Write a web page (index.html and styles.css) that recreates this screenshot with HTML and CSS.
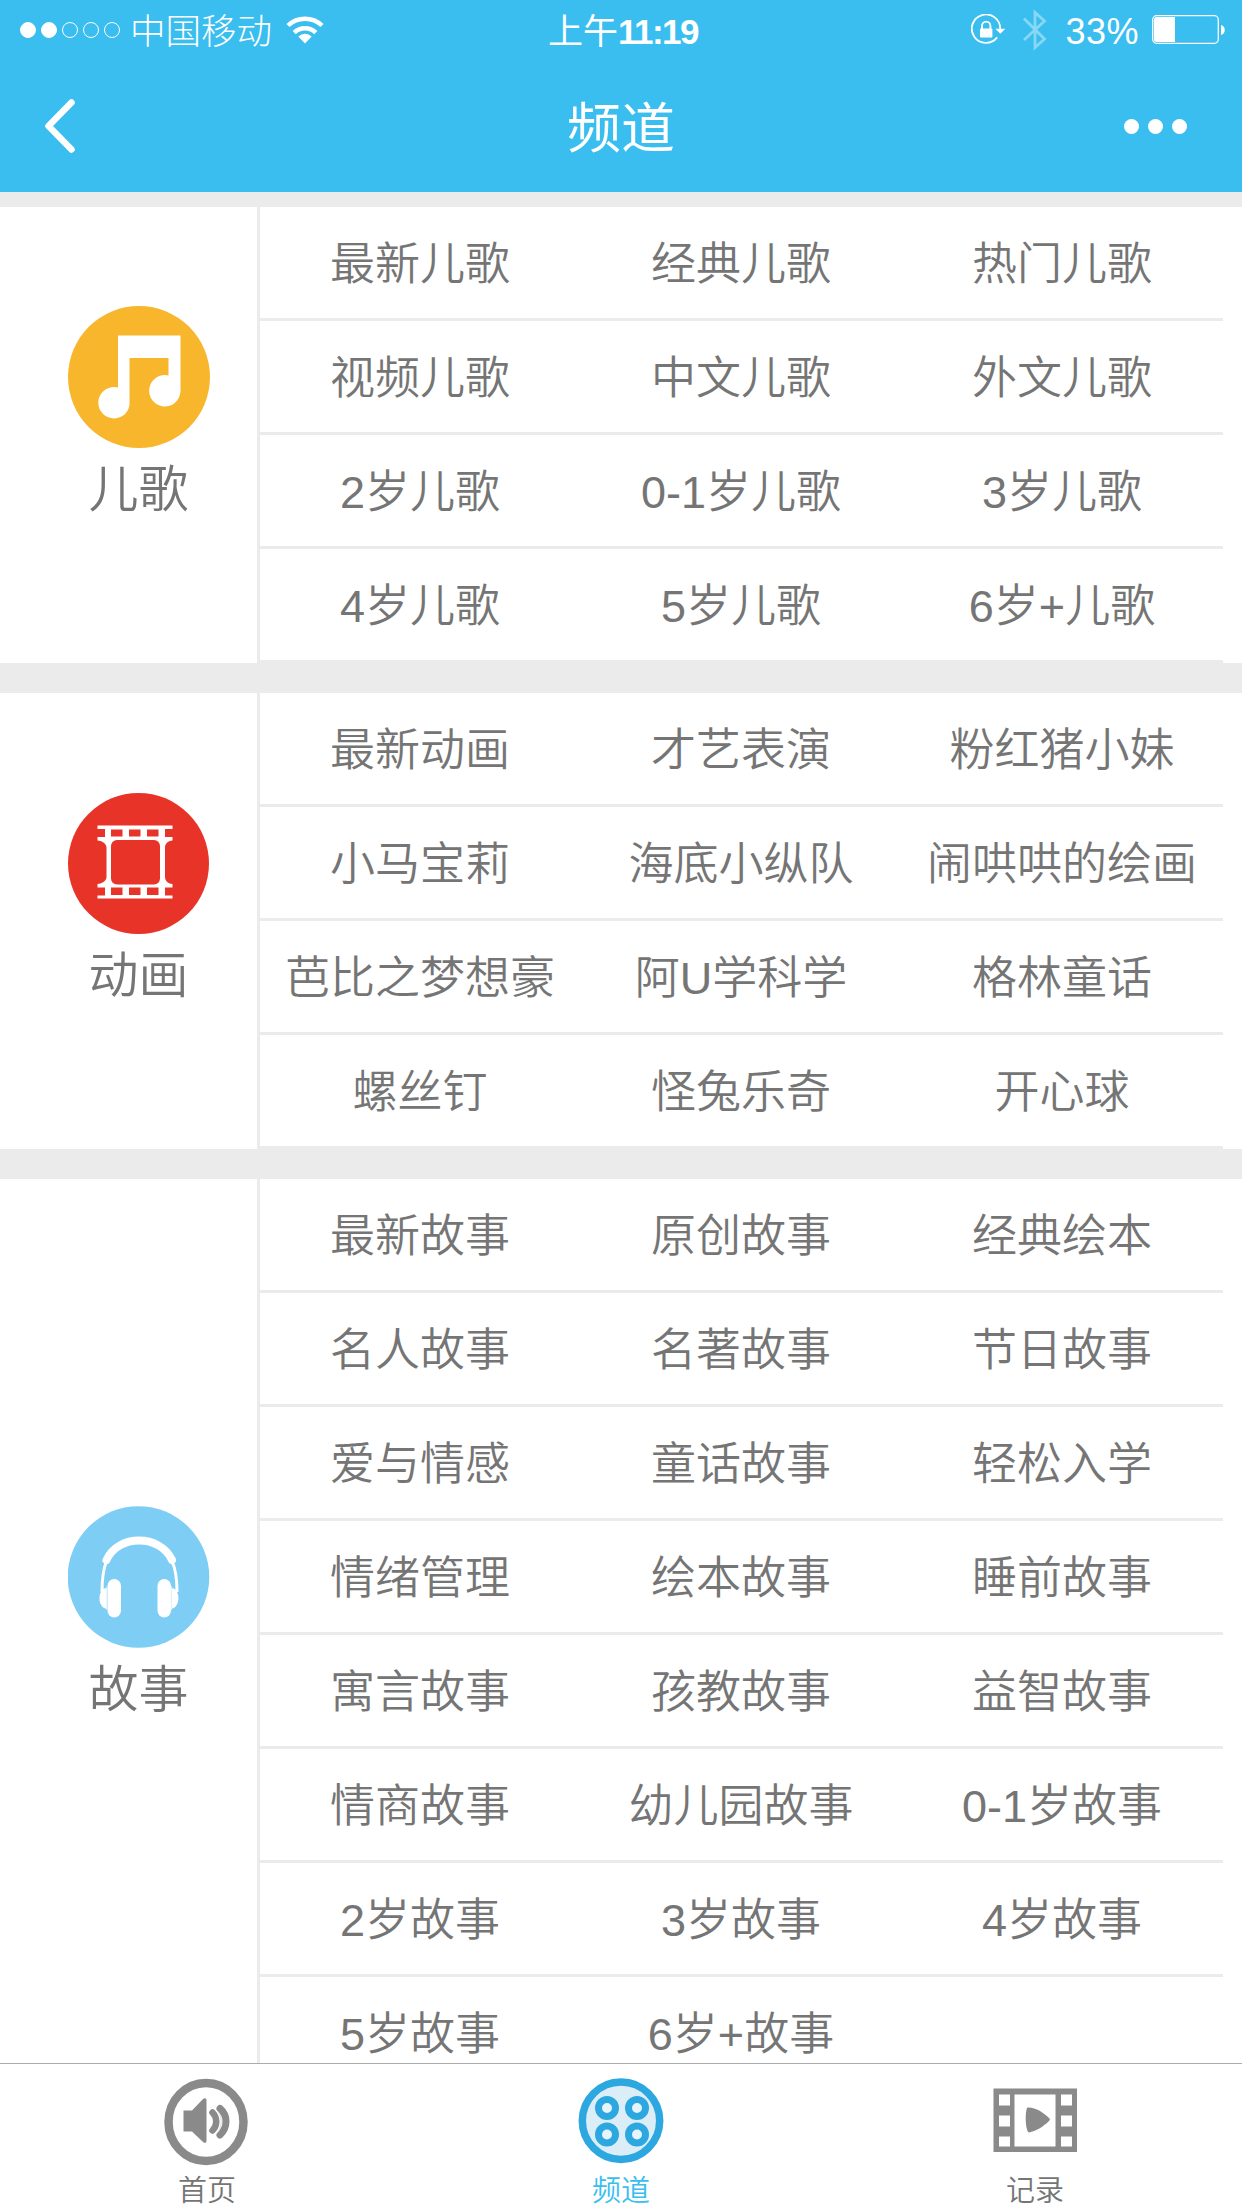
FILE: index.html
```html
<!DOCTYPE html>
<html lang="zh-CN">
<head>
    <meta charset="UTF-8">
    <meta name="viewport" content="width=device-width, initial-scale=1.0">
    <title>频道</title>
    <link rel="stylesheet" href="styles.css">
</head>
<body>
    <header class="header">
        <div class="status-bar">
            <div class="status-left">
                <div class="signal">
                    <i class="on"></i><i class="on"></i><i></i><i></i><i></i>
                </div>
                <span class="carrier">中国移动</span>
                <svg class="wifi" width="38" height="28" viewBox="0 0 38 28">
                    <g fill="none" stroke="#fff" stroke-width="4.500">
                        <path d="M2 9.500a24.500 24.500 0 0 1 34 0"/>
                        <path d="M8.200 16.700a15.500 15.500 0 0 1 21.600 0"/>
                    </g>
                    <path d="M19 27.500l-6.700-7a9.800 9.800 0 0 1 13.400 0z" fill="#fff"/>
                </svg>
            </div>
            <div class="time">上午<span>11:19</span></div>
            <div class="status-right">
                <svg class="lock" width="36" height="32" viewBox="0 0 36 32">
                    <path d="M26.200 23.400A14.200 14.200 0 1 1 29.200 15" fill="none" stroke="#fff" stroke-width="1.800"/>
                    <path d="M24.300 14.800h10l-5 5z" fill="#fff"/>
                    <rect x="9" y="14.500" width="12.400" height="9" rx="1" fill="#fff"/>
                    <path d="M11 15v-3.200a4.200 4.200 0 0 1 8.400 0V15" fill="none" stroke="#fff" stroke-width="1.900"/>
                </svg>
                <svg class="bluetooth" width="24" height="42" viewBox="0 0 24 42">
                    <path d="M1 9.500L21.500 30 12 38.500v-35l9.500 8.500L1 31" fill="none" stroke="#88d8f5" stroke-width="2.800"/>
                </svg>
                <span class="percent">33%</span>
                <svg class="battery" width="74" height="30" viewBox="0 0 74 30">
                    <rect x=".7" y=".7" width="65.600" height="27.600" rx="4" fill="none" stroke="#fff" stroke-width="1.300"/>
                    <path d="M4.500 2H23v25H4.500A2.500 2.500 0 0 1 2 24.500v-20A2.500 2.500 0 0 1 4.500 2z" fill="#fff"/>
                    <path d="M69 10c5 1 5 9 0 10z" fill="#fff"/>
                </svg>
            </div>
        </div>
        <div class="nav-bar">
            <svg class="back" width="32" height="54" viewBox="0 0 32 54">
                <path d="M28.500 3.500L5.500 27l23 23.500" fill="none" stroke="#fff" stroke-width="6.500" stroke-linecap="round" stroke-linejoin="round"/>
            </svg>
            <h1>频道</h1>
            <div class="more"><i></i><i></i><i></i></div>
        </div>
    </header>

    <main class="channels">
        <section class="channel">
            <div class="category">
                <svg width="142" height="142" viewBox="0 0 142 142">
                    <circle cx="71" cy="71" r="71" fill="#f8b62c"/>
                    <path d="M50 29.500h62.500V85a15.700 15.700 0 1 1-12-15.500V52H61.500v47a15.700 15.700 0 1 1-11.500-17.500z" fill="#fff"/>
                </svg>
                <h2>儿歌</h2>
            </div>
            <ul class="items">
                <li>最新儿歌</li>
                <li>经典儿歌</li>
                <li>热门儿歌</li>
                <li>视频儿歌</li>
                <li>中文儿歌</li>
                <li>外文儿歌</li>
                <li>2岁儿歌</li>
                <li>0-1岁儿歌</li>
                <li>3岁儿歌</li>
                <li>4岁儿歌</li>
                <li>5岁儿歌</li>
                <li>6岁+儿歌</li>
            </ul>
        </section>

        <section class="channel">
            <div class="category">
                <svg width="142" height="142" viewBox="0 0 142 142">
                    <circle cx="70.500" cy="71.500" r="70.500" fill="#e83428"/>
                    <path d="M29.500 33.500h75V37H97v8h7.500v3.500c-4 0-7.500 3-7.500 7V85c0 4 3.500 7 7.500 7v3.500H97v8h7.500v3h-75v-3H37v-8h-7.500V92c4 0 9-3 9-7V55.500c0-4-5-7-9-7V45H37v-8h-7.500z" fill="#fff"/>
                    <g fill="#e83428">
                        <rect x="43" y="48" width="49" height="44.500" rx="6"/>
                        <rect x="43" y="37.500" width="11.500" height="7"/>
                        <rect x="61" y="37.500" width="11.500" height="7"/>
                        <rect x="79" y="37.500" width="11.500" height="7"/>
                        <rect x="43" y="95.500" width="11.500" height="7.500"/>
                        <rect x="61" y="95.500" width="11.500" height="7.500"/>
                        <rect x="79" y="95.500" width="11.500" height="7.500"/>
                    </g>
                </svg>
                <h2>动画</h2>
            </div>
            <ul class="items">
                <li>最新动画</li>
                <li>才艺表演</li>
                <li>粉红猪小妹</li>
                <li>小马宝莉</li>
                <li>海底小纵队</li>
                <li>闹哄哄的绘画</li>
                <li>芭比之梦想豪</li>
                <li>阿U学科学</li>
                <li>格林童话</li>
                <li>螺丝钉</li>
                <li>怪兔乐奇</li>
                <li>开心球</li>
            </ul>
        </section>

        <section class="channel">
            <div class="category">
                <svg width="142" height="142" viewBox="0 0 142 142">
                    <circle cx="70.500" cy="71" r="70.800" fill="#7dcdf4"/>
                    <g fill="none" stroke="#fff">
                        <path d="M38.500 54C50 28 92 28 104 54" stroke-width="8" stroke-linecap="round"/>
                        <path d="M38.500 55C35 64 34 74 34 86M104 55c4 9 5 19 5 31" stroke-width="3"/>
                    </g>
                    <path d="M39 82c-10 0-10 20 0 21zM103 82c10 0 10 20 0 21z" fill="#fff"/>
                    <rect x="39.500" y="73" width="13.500" height="38.500" rx="6.700" fill="#fff"/>
                    <rect x="89.500" y="73" width="13.500" height="38.500" rx="6.700" fill="#fff"/>
                    <path d="M39 80v24M103.400 80v24" stroke="#d9f0fb" stroke-width="1"/>
                </svg>
                <h2>故事</h2>
            </div>
            <ul class="items">
                <li>最新故事</li>
                <li>原创故事</li>
                <li>经典绘本</li>
                <li>名人故事</li>
                <li>名著故事</li>
                <li>节日故事</li>
                <li>爱与情感</li>
                <li>童话故事</li>
                <li>轻松入学</li>
                <li>情绪管理</li>
                <li>绘本故事</li>
                <li>睡前故事</li>
                <li>寓言故事</li>
                <li>孩教故事</li>
                <li>益智故事</li>
                <li>情商故事</li>
                <li>幼儿园故事</li>
                <li>0-1岁故事</li>
                <li>2岁故事</li>
                <li>3岁故事</li>
                <li>4岁故事</li>
                <li>5岁故事</li>
                <li>6岁+故事</li>
                <li></li>
            </ul>
        </section>
    </main>

    <nav class="tab-bar">
        <a class="tab">
            <svg width="86" height="88" viewBox="0 0 86 88">
                <ellipse cx="42" cy="44" rx="37.500" ry="39" fill="none" stroke="#8a8a8a" stroke-width="8.500"/>
                <path d="M19.500 32.500h8.500l11-11.500c2-1.500 3.500-1 3.500 1.500v40c0 2.500-1.500 3-3.500 1.500L28 53.500h-8.500z" fill="#8a8a8a"/>
                <g fill="none" stroke="#8a8a8a" stroke-width="6.500" stroke-linecap="round">
                    <path d="M48.500 34.500c5 5 5 13 0 18"/>
                    <path d="M56 30.500c8 7 8 19 0 26.500" stroke-width="7"/>
                </g>
                <path d="M53.500 33c5 6 5 15 0 21.500" fill="none" stroke="#ddd" stroke-width="1"/>
            </svg>
            <span>首页</span>
        </a>
        <a class="tab active">
            <svg width="86" height="88" viewBox="0 0 86 88">
                <circle cx="43" cy="42.700" r="38.700" fill="#dbeef8" stroke="#2ca7e0" stroke-width="7.500"/>
                <g fill="#e6f4fb" stroke="#2ca7e0" stroke-width="7">
                    <circle cx="29" cy="30" r="8.500"/>
                    <circle cx="59" cy="30" r="8.500"/>
                    <circle cx="29" cy="56.500" r="8.500"/>
                    <circle cx="59" cy="56.500" r="8.500"/>
                </g>
            </svg>
            <span>频道</span>
        </a>
        <a class="tab">
            <svg width="86" height="88" viewBox="0 0 86 88">
                <rect x="1.500" y="10.500" width="83.500" height="63.500" fill="#8a8a8a"/>
                <g fill="#fff">
                    <rect x="22.500" y="16.500" width="41" height="52"/>
                    <rect x="7" y="16.500" width="11" height="11"/>
                    <rect x="7" y="37.500" width="11" height="11"/>
                    <rect x="7" y="58.500" width="11" height="10"/>
                    <rect x="69" y="16.500" width="11" height="11"/>
                    <rect x="69" y="37.500" width="11" height="11"/>
                    <rect x="69" y="58.500" width="11" height="10"/>
                </g>
                <path d="M35.500 29.500c8-.5 16 5 21.500 10.500 1.200 1.200 1.200 2 0 3-6 6-13 10-20 11.500-4-2-4-23-1.500-25z" fill="#8a8a8a"/>
            </svg>
            <span>记录</span>
        </a>
    </nav>
</body>
</html>
```
FILE: styles.css
```css
* {
    box-sizing: border-box;
    margin: 0;
    padding: 0;
}
body {
    display: flex;
    flex-direction: column;
    height: 2208px;
    overflow: hidden;
    background-color: #ebebeb;
    color: #757575;
    font-family: "Liberation Sans", "Noto Sans CJK SC", sans-serif;
    font-weight: 350;
}
svg {
    display: block;
    flex: none;
}

/* header */
.header {
    height: 192px;
    background-color: #39beef;
    color: #fff;
}
.status-bar {
    display: grid;
    grid-template-columns: 1fr auto 1fr;
    align-items: center;
    height: 60px;
    padding: 0 16px 0 20px;
    font-size: 36px;
    font-weight: 300;
    line-height: 56px;
}
.status-left, .status-right {
    display: flex;
    align-items: center;
}
.status-right {
    justify-content: flex-end;
}
.signal {
    display: flex;
    gap: 5px;
}
.signal i {
    width: 16px;
    height: 16px;
    border: 1px solid #fff;
    border-radius: 50%;
}
.signal .on {
    background-color: #fff;
}
.carrier {
    margin: 0 14px 0 10px;
    padding-top: 4px;
    font-size: 35.5px;
}
.time {
    padding-top: 4px;
    font-size: 35px;
    font-weight: 400;
}
.time span {
    font-weight: bold;
    letter-spacing: -1.5px;
}
.lock {
    margin-right: 16px;
}
.bluetooth {
    margin-right: 18px;
}
.percent {
    margin-right: 13px;
    padding-top: 4px;
    letter-spacing: 0.5px;
}
.nav-bar {
    display: flex;
    align-items: center;
    justify-content: space-between;
    height: 132px;
    padding: 0 55px 0 43px;
}
.nav-bar h1 {
    padding: 5px 0 0 12px;
    font-size: 54px;
    font-weight: 400;
    line-height: 80px;
}
.back {
    margin-right: 31px;
}
.more {
    display: flex;
    gap: 9px;
}
.more i {
    width: 15px;
    height: 15px;
    border-radius: 50%;
    background-color: #fff;
}

/* channel list */
.channels {
    flex: 1;
    min-height: 0;
    padding-top: 15px;
    overflow: hidden;
}
.channel {
    display: flex;
    margin-bottom: 30px;
    padding-right: 19px;
    background-color: #fff;
}
.category {
    display: flex;
    flex-direction: column;
    align-items: center;
    justify-content: center;
    width: 257px;
    padding: 0 0 45px 20px;
}
.category h2 {
    margin-top: 12px;
    font-size: 50px;
    font-weight: 350;
    line-height: 60px;
}
.items {
    display: grid;
    flex: 1;
    grid-template-columns: repeat(3, 1fr);
    grid-auto-rows: 114px;
    border-left: 3px solid #ebebeb;
    list-style: none;
}
.items li {
    padding: 2px 1px 0 0;
    border-bottom: 3px solid #ebebeb;
    font-size: 45px;
    line-height: 111px;
    text-align: center;
    white-space: nowrap;
}

/* bottom tabs */
.tab-bar {
    display: grid;
    grid-template-columns: repeat(3, 1fr);
    height: 145px;
    border-top: 1px solid #acacac;
    background-color: #fff;
}
.tab {
    display: flex;
    flex-direction: column;
    align-items: center;
    padding-top: 14px;
    font-size: 29px;
    line-height: 51px;
}
.active {
    color: #39beef;
}
```
